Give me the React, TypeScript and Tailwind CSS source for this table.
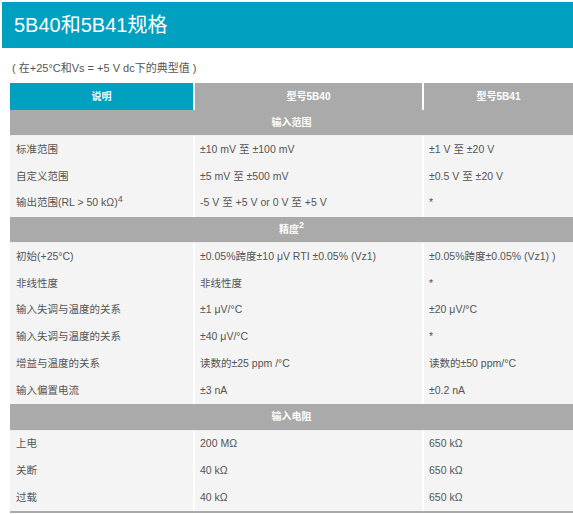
const font = { fontFamily: '"Liberation Sans", "Noto Sans CJK SC", sans-serif' }

type Row = [React.ReactNode, React.ReactNode, React.ReactNode]
type Section = { title: React.ReactNode; rows: Row[] }

const sections: Section[] = [
  {
    title: '输入范围',
    rows: [
      ['标准范围', '±10 mV 至 ±100 mV', '±1 V 至 ±20 V'],
      ['自定义范围', '±5 mV 至 ±500 mV', '±0.5 V 至 ±20 V'],
      [
        <>
          输出范围(RL &gt; 50 kΩ)<sup className="text-[9px]">4</sup>
        </>,
        '-5 V 至 +5 V or 0 V 至 +5 V',
        '*',
      ],
    ],
  },
  {
    title: (
      <>
        精度<sup className="text-[9px]">2</sup>
      </>
    ),
    rows: [
      ['初始(+25°C)', '±0.05%跨度±10 μV RTI ±0.05% (Vz1)', '±0.05%跨度±0.05% (Vz1) )'],
      ['非线性度', '非线性度', '*'],
      ['输入失调与温度的关系', '±1 μV/°C', '±20 μV/°C'],
      ['输入失调与温度的关系', '±40 μV/°C', '*'],
      ['增益与温度的关系', '读数的±25 ppm /°C', '读数的±50 ppm/°C'],
      ['输入偏置电流', '±3 nA', '±0.2 nA'],
    ],
  },
  {
    title: '输入电阻',
    rows: [
      ['上电', '200 MΩ', '650 kΩ'],
      ['关断', '40 kΩ', '650 kΩ'],
      ['过载', '40 kΩ', '650 kΩ'],
    ],
  },
]

export default function App() {
  return (
    <div className="h-[514px] w-[573px] overflow-hidden bg-white" style={font}>
      <div className="ml-[2px] mt-[2px] flex h-[46px] items-center bg-[#00a0c0] pl-[12px]">
        <h1 className="text-[20px] text-white">5B40和5B41规格</h1>
      </div>
      <p className="ml-[12px] mt-[12px] text-[11px] text-[#555]">( 在+25°C和Vs = +5 V dc下的典型值 )</p>
      <div className="ml-[10px] mt-[6px] w-[563px] border-b-2 border-[#aaa] text-[10.5px]">
        <div className="flex h-[27px] gap-[2px] text-[10px] font-bold text-white">
          <div className="flex w-[183px] items-center justify-center bg-[#00a0c0]">说明</div>
          <div className="flex w-[227px] items-center justify-center bg-[#aaa]">型号5B40</div>
          <div className="flex flex-1 items-center justify-center bg-[#aaa]">型号5B41</div>
        </div>
        {sections.map((s, i) => (
          <div key={i}>
            <div className="flex h-[26.8px] items-center justify-center border-b border-[#eee] bg-[#aaa] text-[10px] font-bold text-white">
              <span>{s.title}</span>
            </div>
            {s.rows.map((r, j) => (
              <div key={j} className="flex h-[26.75px] gap-[2px] bg-white text-[#555]">
                <div className="flex w-[183px] items-center bg-[#f4f4f4] pl-[6px]">{r[0]}</div>
                <div className="flex w-[227px] items-center bg-[#f4f4f4] pl-[5px]">{r[1]}</div>
                <div className="flex flex-1 items-center bg-[#f4f4f4] pl-[5px]">{r[2]}</div>
              </div>
            ))}
          </div>
        ))}
      </div>
    </div>
  )
}
